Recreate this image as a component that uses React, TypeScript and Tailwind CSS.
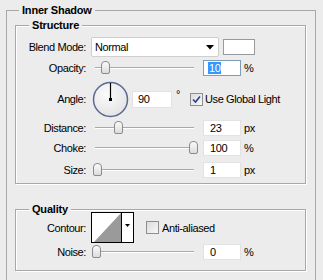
import React from "react";

const FONT = "font-['Liberation_Sans',Arial,sans-serif]";

function Label({ children }: { children: React.ReactNode }) {
  return <div className="w-[71px] shrink-0 text-right pr-[1px]">{children}</div>;
}

function Slider({ pos }: { pos: number }) {
  return (
    <div className="relative ml-[8px] h-[16px] w-[99px] shrink-0">
      <div className="absolute left-0 right-0 top-[7px] h-[1px] bg-[#a9a9a9]" />
      <div className="absolute left-0 right-0 top-[8px] h-[1px] bg-white" />
      <div
        className="absolute top-[1px] h-[13px] w-[9px] rounded-t-[4px] rounded-b-[2px] border border-[#8b8b8b] bg-gradient-to-b from-[#fbfbfb] to-[#dcdcdc]"
        style={{ left: pos - 4 }}
      />
    </div>
  );
}

function NumBox({ value, focused, unit, selected }: { value: string; focused?: boolean; unit: string; selected?: boolean }) {
  return (
    <>
      <div
        className={
          "ml-[9px] flex h-[16px] w-[38px] shrink-0 items-center bg-white pl-[4px] " +
          (focused ? "border border-[#7f9db9]" : "border border-[#e2e2e2]")
        }
      >
        {selected ? <span className="bg-[#3399ff] px-[1px] text-white leading-[12px]">{value}</span> : <span className="pl-[2px]">{value}</span>}
      </div>
      <div className="ml-[3px]">{unit}</div>
    </>
  );
}

function CheckBox({ checked }: { checked?: boolean }) {
  return (
    <div className="flex h-[13px] w-[13px] shrink-0 items-center justify-center border border-[#8e8f8f] bg-gradient-to-br from-[#dcdcdc] to-[#f8f8f8]">
      {checked && (
        <svg width="9" height="9" viewBox="0 0 9 9">
          <path d="M1 4.5 L3.5 7 L8 1.5" fill="none" stroke="#2a3f8f" strokeWidth="1.6" />
        </svg>
      )}
    </div>
  );
}

function Group({ title, className, legendLeft, children }: { title: string; className: string; legendLeft: string; children: React.ReactNode }) {
  return (
    <div className={"relative border border-[#a8a8a8] shadow-[inset_1px_1px_0_#ffffff,1px_1px_0_#ffffff] " + className}>
      <div className={"absolute top-[-8px] bg-[#ececec] px-[3px] font-bold leading-[14px] tracking-[-0.2px] " + legendLeft}>{title}</div>
      {children}
    </div>
  );
}

export default function App() {
  return (
    <div className={"h-[280px] w-[323px] overflow-hidden bg-[#ececec] pt-[10px] text-[11px] leading-[14px] tracking-[-0.4px] text-black " + FONT}>
      <div className="relative ml-[6px] h-[300px] w-[310px] border-l border-r border-t border-[#a8a8a8]">
        <div className="absolute left-[12px] top-[-8px] bg-[#ececec] px-[3px] font-bold leading-[14px] tracking-[-0.2px]">Inner Shadow</div>

        <Group title="Structure" className="ml-[8px] mt-[14px] h-[159px] w-[291px] pt-[11px]" legendLeft="left-[13px]">
          {/* Blend Mode */}
          <div className="flex h-[20px] items-center">
            <Label>Blend Mode:</Label>
            <div className="ml-[4px] flex h-[20px] w-[128px] shrink-0 items-center justify-between rounded-[2px] border border-[#cfcfcf] bg-white pl-[3px] pr-[4px]">
              <span>Normal</span>
              <svg width="8" height="5" viewBox="0 0 8 5">
                <path d="M0 0 H8 L4 4.5 Z" fill="#000" />
              </svg>
            </div>
            <div className="ml-[4px] h-[16px] w-[32px] shrink-0 border border-[#9a9a9a] bg-white" />
          </div>

          {/* Opacity */}
          <div className="flex h-[22px] items-center">
            <Label>Opacity:</Label>
            <Slider pos={10} />
            <NumBox value="10" focused selected unit="%" />
          </div>

          {/* Angle */}
          <div className="flex h-[40px] items-center">
            <Label>Angle:</Label>
            <div className="ml-[5px] shrink-0">
              <svg width="37" height="37" viewBox="0 0 37 37">
                <defs>
                  <radialGradient id="dialg" cx="0.4" cy="0.35" r="0.7">
                    <stop offset="0" stopColor="#fbfbfb" />
                    <stop offset="1" stopColor="#e3e3e3" />
                  </radialGradient>
                </defs>
                <circle cx="18.5" cy="18.5" r="17" fill="url(#dialg)" stroke="#5a6a93" strokeWidth="1.5" />
                <line x1="18.5" y1="18.5" x2="18.5" y2="2" stroke="#000" strokeWidth="1.2" />
                <rect x="17" y="17" width="3" height="3" fill="#000" />
              </svg>
            </div>
            <div className="ml-[3px] flex h-[17px] w-[40px] shrink-0 items-center border border-[#e2e2e2] bg-white pl-[5px]">90</div>
            <div className="ml-[4px] self-start pt-[8px]">°</div>
            <div className="ml-[10px]">
              <CheckBox checked />
            </div>
            <div className="ml-[2px]">Use Global Light</div>
          </div>

          {/* Distance */}
          <div className="flex h-[18px] items-center">
            <Label>Distance:</Label>
            <Slider pos={23} />
            <NumBox value="23" unit="px" />
          </div>

          {/* Choke */}
          <div className="flex h-[22px] items-center">
            <Label>Choke:</Label>
            <Slider pos={98} />
            <NumBox value="100" unit="%" />
          </div>

          {/* Size */}
          <div className="flex h-[22px] items-center">
            <Label>Size:</Label>
            <Slider pos={2} />
            <NumBox value="1" unit="px" />
          </div>
        </Group>

        <Group title="Quality" className="ml-[8px] mt-[25px] h-[62px] w-[291px] pt-[2px]" legendLeft="left-[13px]">
          {/* Contour */}
          <div className="flex h-[31px] items-center">
            <Label>Contour:</Label>
            <div className="ml-[4px] flex h-[31px] w-[43px] shrink-0 border border-black bg-white">
              <svg width="29" height="29" viewBox="0 0 29 29" className="shrink-0">
                <path d="M2 29 L29 0 L29 29 Z" fill="#9a9a9a" />
              </svg>
              <div className="flex w-[12px] items-center justify-center border-l border-black pb-[4px]">
                <svg width="5" height="3" viewBox="0 0 5 3">
                  <path d="M0 0 H5 L2.5 3 Z" fill="#000" />
                </svg>
              </div>
            </div>
            <div className="ml-[12px]">
              <CheckBox />
            </div>
            <div className="ml-[3px]">Anti-aliased</div>
          </div>

          {/* Noise */}
          <div className="flex h-[18px] items-center">
            <Label>Noise:</Label>
            <Slider pos={1} />
            <NumBox value="0" unit="%" />
          </div>
        </Group>
      </div>
    </div>
  );
}
